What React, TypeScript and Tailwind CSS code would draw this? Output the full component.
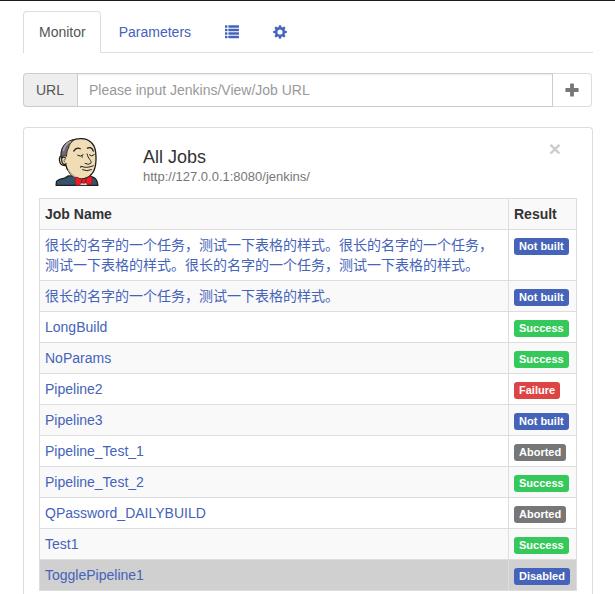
import React from 'react';

type Result = 'Not built' | 'Success' | 'Failure' | 'Aborted' | 'Disabled';

interface Job {
  name: string;
  result: Result;
}

const jobs: Job[] = [
  {
    name: '很长的名字的一个任务，测试一下表格的样式。很长的名字的一个任务，测试一下表格的样式。很长的名字的一个任务，测试一下表格的样式。',
    result: 'Not built',
  },
  { name: '很长的名字的一个任务，测试一下表格的样式。', result: 'Not built' },
  { name: 'LongBuild', result: 'Success' },
  { name: 'NoParams', result: 'Success' },
  { name: 'Pipeline2', result: 'Failure' },
  { name: 'Pipeline3', result: 'Not built' },
  { name: 'Pipeline_Test_1', result: 'Aborted' },
  { name: 'Pipeline_Test_2', result: 'Success' },
  { name: 'QPassword_DAILYBUILD', result: 'Aborted' },
  { name: 'Test1', result: 'Success' },
  { name: 'TogglePipeline1', result: 'Disabled' },
];

const badgeColor: Record<Result, string> = {
  'Not built': 'bg-[#4563b9]',
  Success: 'bg-[#34c95a]',
  Failure: 'bg-[#dd4444]',
  Aborted: 'bg-[#777777]',
  Disabled: 'bg-[#4563b9]',
};

function ListIcon() {
  return (
    <svg viewBox="0 0 14 14" className="size-3.5" fill="currentColor" aria-hidden="true">
      {[0, 3.5, 7, 10.5].map((y) => (
        <g key={y}>
          <rect x="0" y={y + 0.3} width="2.4" height="2.4" rx="0.5" />
          <rect x="3.4" y={y + 0.3} width="10.6" height="2.4" rx="0.5" />
        </g>
      ))}
    </svg>
  );
}

function CogIcon() {
  return (
    <svg viewBox="0 0 28 28" className="size-3.5" aria-hidden="true">
      <circle cx="14" cy="14" r="7.6" fill="none" stroke="currentColor" strokeWidth="4.8" />
      {[0, 45, 90, 135, 180, 225, 270, 315].map((angle) => (
        <path
          key={angle}
          d="M10.8 5.500 L12 0.4 H16 L17.2 5.500 Z"
          fill="currentColor"
          transform={`rotate(${angle} 14 14)`}
        />
      ))}
    </svg>
  );
}

function PlusIcon() {
  return (
    <svg viewBox="0 0 14 14" className="size-3.5" fill="currentColor" aria-hidden="true">
      <path d="M5.7 0.4h2.6q.6 0 .6.6v4.1h4.1q.6 0 .6.6v2.6q0 .6-.6.6H8.900v4.100q0 .6-.6.6H5.700q-.6 0-.6-.6V8.900H1q-.6 0-.6-.6V5.700q0-.6.6-.6h4.100V1q0-.6.6-.6z" />
    </svg>
  );
}

/* Butler portrait: bald head, closed eyes, blue jacket and red bow tie. */
function JenkinsLogo() {
  return (
    <svg viewBox="0 0 132 147" className="h-12 w-11" role="img" aria-label="Jenkins">
      <path
        d="M2 145 L3 134 Q6 127 28 123 L40 116 L104 116 L118 121 Q128 126 130 145 Z"
        fill="#35546b"
        stroke="#1f1d1f"
        strokeWidth="4"
        strokeLinejoin="round"
      />
      <path d="M66 124 L94 118 L98 145 H66 Z" fill="#e8e4e0" stroke="#1f1d1f" strokeWidth="2" />
      <path
        d="M25 84 C10 82 9 58 18 54 C15 27 39 4 76 2 C103 1 121 18 123 43 C126 66 124 96 112 109 C104 121 87 127 75 125 C57 121 44 110 38 98 C34 94 34 90 33 85 Z"
        fill="#f0ddb6"
        stroke="#1f1d1f"
        strokeWidth="4"
        strokeLinejoin="round"
      />
      <path
        d="M18 57 C14 29 32 8 60 4 C48 11 42 20 40 31 C36 37 34 46 34 56 C27 52 20 55 18 63 Z"
        fill="#6d6b6d"
        stroke="#2b292b"
        strokeWidth="3"
      />
      <path d="M24 40 C27 25 36 15 47 11" fill="none" stroke="#a9a7a9" strokeWidth="5" />
      <path d="M32 62 C22 53 16 62 20 74 C22 80 28 84 34 78" fill="#f0ddb6" stroke="#1f1d1f" strokeWidth="4" />
      <path d="M31 65 C25 64 25 73 30 75" fill="none" stroke="#75503b" strokeWidth="3" />
      <path d="M40 98 Q48 113 62 120" fill="none" stroke="#d3b78e" strokeWidth="4" />
      <g fill="none" stroke="#1f1d1f" strokeLinecap="round" strokeLinejoin="round">
        <path d="M56 40 Q64 27 76 33" strokeWidth="4" />
        <path d="M98 31 Q110 25 116 40" strokeWidth="4" />
        <path d="M68 53 Q77 60 85 51 M81 54 L82 59" strokeWidth="3" />
        <path d="M104 52 Q111 59 119 51" strokeWidth="3" />
        <path d="M97 49 C98 63 114 70 108 78 Q101 83 91 78" strokeWidth="3" />
        <path d="M80 87 Q94 94 116 85 M80 87 Q76 84 77 90 M83 97 Q96 104 110 97" strokeWidth="3" />
      </g>
      <path
        d="M60 121 Q67 117 80 128 Q85 123 93 126 Q101 116 110 118 Q114 127 111 143 Q99 144 93 137 Q87 141 81 137 Q76 145 64 146 Q59 132 60 121 Z"
        fill="#ee1c24"
        stroke="#941b22"
        strokeWidth="2"
      />
      <path d="M80 128 L81 138 M93 126 L93 138" stroke="#1f1d1f" strokeWidth="2" />
    </svg>
  );
}

export default function App() {
  return (
    <div className="flex min-h-screen flex-col border-t border-[#1c1a1c] bg-white pt-2.5 pr-[22px] pl-[23px] font-['Liberation_Sans','Noto_Sans_CJK_SC',sans-serif] text-sm leading-5 text-[#333]">
      <nav className="flex items-stretch gap-0.5 border-b border-[#ddd] text-[#4563b9]">
        <a href="#monitor" aria-current="page" className="-mb-px rounded-t border border-b-0 border-[#ddd] bg-white pt-2.5 pr-3.5 pb-[11px] pl-[15px] text-[#555]">
          Monitor
        </a>
        <a href="#parameters" className="px-4 pt-[11px] pb-2.5">
          Parameters
        </a>
        <a href="#list" aria-label="List" className="flex items-center px-4">
          <ListIcon />
        </a>
        <a href="#settings" aria-label="Settings" className="flex items-center px-4">
          <CogIcon />
        </a>
      </nav>

      <form className="mt-5 mr-px flex h-[34px]" onSubmit={(e) => e.preventDefault()}>
        <label htmlFor="url" className="flex items-center rounded-l border border-r-0 border-[#ccc] bg-[#eee] pr-[13px] pl-3 text-[#555]">
          URL
        </label>
        <input
          id="url"
          type="text"
          placeholder="Please input Jenkins/View/Job URL"
          className="min-w-0 flex-1 border border-[#ccc] px-[11px] shadow-[inset_0_1px_1px_rgba(0,0,0,0.075)] outline-none placeholder:text-[#999]"
        />
        <button type="submit" aria-label="Add" className="flex items-center rounded-r border border-l-0 border-[#ddd] bg-white px-3 text-[#777]">
          <PlusIcon />
        </button>
      </form>

      <section className="mt-5 flex-1 rounded-t border border-b-0 border-[#ddd] px-[15px]">
        <header className="flex h-[70px] items-start px-4">
          <div className="w-[88px] shrink-0 pt-2.5">
            <JenkinsLogo />
          </div>
          <div className="min-w-0 flex-1 pt-[19px]">
            <h1 className="text-lg leading-5">All Jobs</h1>
            <p className="text-[13px] leading-5 text-[#777]">http://127.0.0.1:8080/jenkins/</p>
          </div>
          <button type="button" aria-label="Close" className="pt-2.5 text-[21px] leading-[21px] font-bold text-[#ccc]">
            ×
          </button>
        </header>

        <table className="w-full border-collapse border border-[#ddd]">
          <thead>
            <tr className="bg-[#f9f9f9] text-left">
              <th className="border border-[#ddd] p-[5px]">Job Name</th>
              <th className="w-[68px] border border-[#ddd] p-[5px]">Result</th>
            </tr>
          </thead>
          <tbody>
            {jobs.map((job) => (
              <tr key={job.name} className={job.result === 'Disabled' ? 'bg-[#d0d0d0]' : 'even:bg-[#f9f9f9]'}>
                <td className="border border-[#ddd] p-[5px] align-top">
                  <a href="#job" className="text-[#4563b9]">
                    {job.name}
                  </a>
                </td>
                <td className="border border-[#ddd] p-[5px] align-top">
                  <span className={`mt-[3px] block h-[17px] w-fit rounded-[3px] px-[5px] text-[11px] leading-[17px] font-bold whitespace-nowrap text-white ${badgeColor[job.result]}`}>
                    {job.result}
                  </span>
                </td>
              </tr>
            ))}
          </tbody>
        </table>
      </section>
    </div>
  );
}
